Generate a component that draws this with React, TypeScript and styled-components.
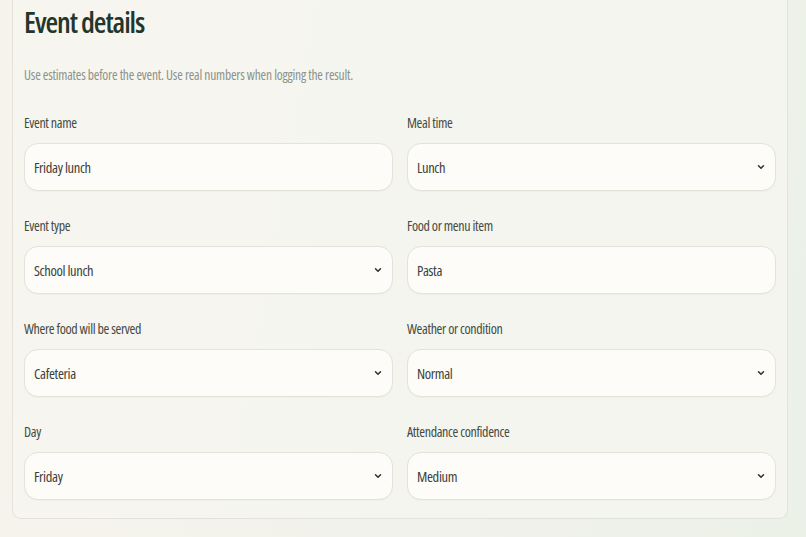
import React from "react";
import styled, { createGlobalStyle } from "styled-components";
import { ChevronDown } from "lucide-react";

const GlobalStyle = createGlobalStyle`
  html, body {
    margin: 0;
    padding: 0;
    height: 100%;
  }
  body {
    background: linear-gradient(100deg, #f6f3ec 0%, #f1f2eb 55%, #ecf1e8 100%);
    font-family: "Open Sans", "Roboto", "Liberation Sans", sans-serif;
    font-stretch: 75%;
    color: #2f352e;
  }
`;

type FieldDef = {
  label: string;
  value: string;
  kind: "text" | "select";
};

const fields: FieldDef[] = [
  { label: "Event name", value: "Friday lunch", kind: "text" },
  { label: "Meal time", value: "Lunch", kind: "select" },
  { label: "Event type", value: "School lunch", kind: "select" },
  { label: "Food or menu item", value: "Pasta", kind: "text" },
  { label: "Where food will be served", value: "Cafeteria", kind: "select" },
  { label: "Weather or condition", value: "Normal", kind: "select" },
  { label: "Day", value: "Friday", kind: "select" },
  { label: "Attendance confidence", value: "Medium", kind: "select" },
];

export default function App() {
  return (
    <>
      <GlobalStyle />
      <Page>
        <Panel>
          <Title>Event details</Title>
          <Hint>Use estimates before the event. Use real numbers when logging the result.</Hint>
          <FieldGrid>
            {fields.map((f) => (
              <Field key={f.label}>
                <Label>{f.label}</Label>
                {f.kind === "text" ? (
                  <TextInput defaultValue={f.value} />
                ) : (
                  <SelectWrap>
                    <Select defaultValue={f.value}>
                      <option>{f.value}</option>
                    </Select>
                    <Chevron size={10} strokeWidth={3.6} />
                  </SelectWrap>
                )}
              </Field>
            ))}
          </FieldGrid>
        </Panel>
      </Page>
    </>
  );
}

const Page = styled.main`
  padding: 0 18px 18px 12px;
`;

const Panel = styled.section`
  background: rgba(246, 246, 240, 0.85);
  border: 1px solid #e1e3da;
  border-top: none;
  border-radius: 0 0 9px 9px;
  padding: 2px 11px 18px 11px;
`;

const Title = styled.h2`
  margin: 0;
  font-size: 29px;
  line-height: 40px;
  font-weight: 560;
  color: #24352a;
  letter-spacing: -1.1px;
`;

const Hint = styled.p`
  margin: 25px 0 32px;
  font-size: 13.5px;
  line-height: 16px;
  font-weight: 380;
  color: #8d9289;
  letter-spacing: -0.2px;
`;

const FieldGrid = styled.div`
  display: grid;
  grid-template-columns: 1fr 1fr;
  column-gap: 14px;
  row-gap: 27px;
`;

const Field = styled.div`
  display: flex;
  flex-direction: column;
  gap: 12px;
`;

const Label = styled.label`
  font-size: 14px;
  line-height: 16px;
  font-weight: 370;
  color: #454b43;
  letter-spacing: -0.35px;
`;

const controlBase = `
  box-sizing: border-box;
  width: 100%;
  height: 48px;
  border: 1px solid #e3e3da;
  border-radius: 14px;
  background: #fdfcf8;
  padding: 0 30px 0 9px;
  font-family: inherit;
  font-stretch: 75%;
  font-size: 14.5px;
  font-weight: 370;
  letter-spacing: -0.35px;
  color: #3b413a;
  outline: none;
  box-shadow: 0 1px 1px rgba(60, 70, 50, 0.03);
`;

const TextInput = styled.input`
  ${controlBase}
`;

const SelectWrap = styled.div`
  position: relative;
`;

const Select = styled.select`
  ${controlBase}
  appearance: none;
  -webkit-appearance: none;
`;

const Chevron = styled(ChevronDown)`
  position: absolute;
  right: 10px;
  top: 50%;
  transform: translateY(-50%);
  color: #2c322b;
  pointer-events: none;
`;
